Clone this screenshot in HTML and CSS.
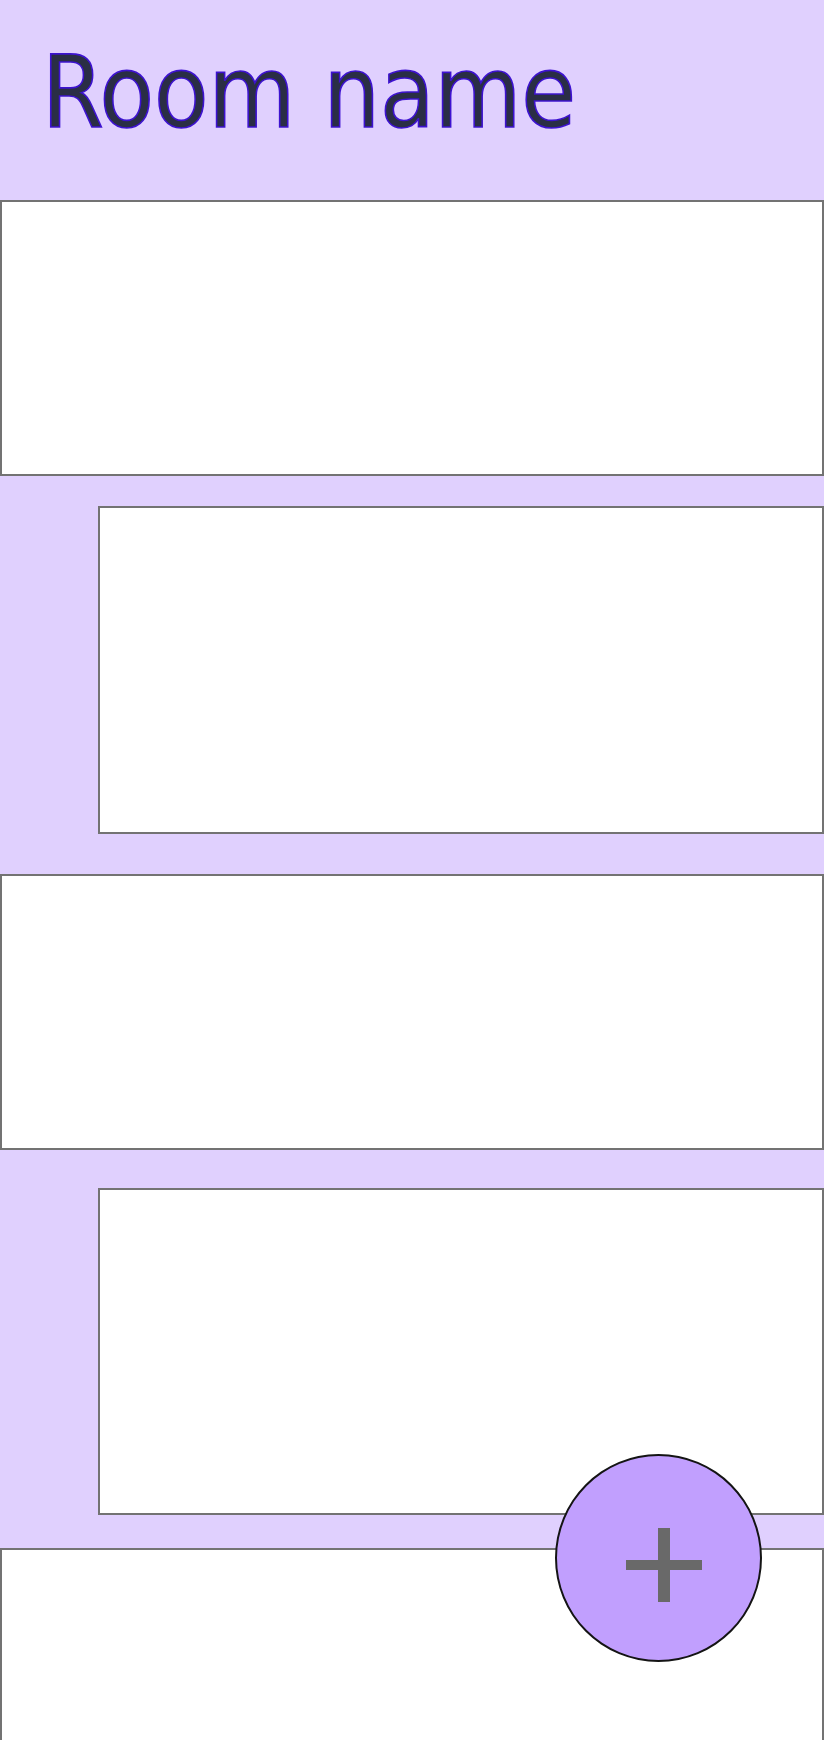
FILE: index.html
```html
<!DOCTYPE html>
<html lang="en">
<head>
<meta charset="utf-8">
<title>Room name</title>
<link rel="stylesheet" href="styles.css">
</head>
<body>
<header class="header">
  <h1 class="title">Room name</h1>
</header>
<main class="list">
  <section class="card card-full"></section>
  <div class="indent indent-a"><section class="card card-inner"></section></div>
  <section class="card card-full"></section>
  <div class="indent indent-b"><section class="card card-inner card-inner-b"></section></div>
  <section class="card card-full"></section>
</main>
<button class="fab" type="button" aria-label="Add">
  <svg class="fab-icon" viewBox="0 0 76 74" width="76" height="74" aria-hidden="true">
    <rect x="0" y="32" width="76" height="10" fill="#696969"/>
    <rect x="32" y="0" width="12" height="74" fill="#696969"/>
  </svg>
</button>
</body>
</html>
```

FILE: styles.css
```css
html, body {
  margin: 0;
  padding: 0;
}
body {
  background: #e0d0fe;
  font-family: "DejaVu Sans Condensed", "DejaVu Sans", sans-serif;
  height: 1740px;
  overflow: hidden;
}
.header {
  box-sizing: border-box;
  height: 200px;
  padding: 44px 0 0 42px;
}
.title {
  margin: 0;
  font-size: 99px;
  font-weight: normal;
  line-height: 98px;
  color: #2a2e45;
  -webkit-text-stroke: 1.6px #3d12d0;
}
.list {
  display: flex;
  flex-direction: column;
}
.card {
  box-sizing: border-box;
  background: #ffffff;
  border: 2px solid #737373;
}
.card-full {
  height: 276px;
}
.indent {
  padding-left: 98px;
}
.indent-a {
  padding-top: 30px;
  padding-bottom: 40px;
}
.indent-b {
  padding-top: 38px;
  padding-bottom: 33px;
}
.card-inner {
  height: 328px;
}
.card-inner-b {
  height: 327px;
}
.fab {
  position: fixed;
  left: 555px;
  top: 1454px;
  width: 207px;
  height: 208px;
  box-sizing: border-box;
  border-radius: 50%;
  background: #c19ffe;
  border: 2px solid #141414;
  padding: 0;
  cursor: pointer;
}
.fab-icon {
  position: absolute;
  left: 69px;
  top: 72px;
}
```
